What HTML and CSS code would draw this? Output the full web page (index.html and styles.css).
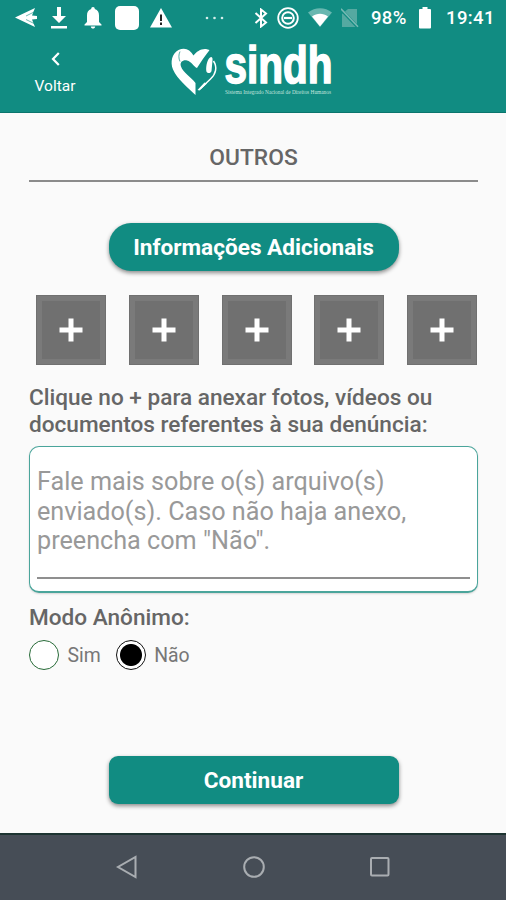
FILE: index.html
```html
<!DOCTYPE html>
<html lang="pt-BR">
<head>
    <meta charset="UTF-8">
    <meta name="viewport" content="width=device-width, initial-scale=1.0">
    <title>SINDH - Informações Adicionais</title>
    <link rel="stylesheet" href="styles.css">
</head>
<body>

    <!-- Barra de status -->
    <div class="status-bar">
        <div class="status-left">
            <svg width="22" height="20" viewBox="0 0 22 20"><path d="M0 9.500 20 0l-3 7.500 5 .5v3l-5 .5L20 19z" fill="#fff"/><path d="M11 8 20 3.500M11 11.500l8 4" stroke="#118c82" stroke-width=".6"/></svg>
            <svg width="16" height="22" viewBox="0 0 16 22"><path d="M6 0h4v9h5l-7 7-7-7h5zM0 19h16v2.500H0z" fill="#fff"/></svg>
            <svg width="18" height="22" viewBox="0 0 18 22"><path d="M9 0c1.200 0 1.800.8 1.800 2C14 3 15 5.500 15 8.500V15l2.500 2.500v1H.5v-1L3 15V8.500C3 5.500 4 3 7.200 2 7.200.8 7.800 0 9 0zM6.800 19.500h4.400C11 21 10.200 21.500 9 21.500s-2-.5-2.200-2z" fill="#fff"/></svg>
            <span class="app-square"></span>
            <svg width="22" height="20" viewBox="0 0 22 20"><path d="M11 0 22 19.500H0z" fill="#fff"/><path d="M11 6.500V13M11 14.500v2.500" stroke="#222" stroke-width="2"/></svg>
            <svg class="dots" width="19" height="4" viewBox="0 0 19 4"><g fill="#d5edea"><circle cx="2" cy="2" r="1.300"/><circle cx="9.500" cy="2" r="1.300"/><circle cx="17" cy="2" r="1.300"/></g></svg>
        </div>
        <div class="status-right">
            <svg width="14" height="20" viewBox="0 0 14 20"><path d="m1.500 5 10.500 9.500L7 18.500v-17L12 5.500 1.500 15" fill="none" stroke="#fff" stroke-width="2"/></svg>
            <svg width="22" height="22" viewBox="0 0 22 22"><g fill="none" stroke="#fff"><circle cx="11" cy="11" r="9.800" stroke-width="1.800"/><circle cx="11" cy="11" r="5.800" stroke-width="2"/><path d="M7 11h8" stroke-width="2.200"/></g></svg>
            <svg width="24" height="19" viewBox="0 0 24 19"><path d="M0 4.500C7-1.200 17-1.200 24 4.500L12 19z" fill="#68b7b0"/><path d="M4 8.500c5-3.800 11-3.800 16 0L12 18.500z" fill="#fff"/></svg>
            <svg width="18" height="20" viewBox="0 0 18 20"><path d="M7 1h9v18H1V6z" fill="#55a9a1"/><path d="m0 1.500 17 18" stroke="#118c82" stroke-width="3"/><path d="m0 .8 17 18" stroke="#78bab4" stroke-width="1.500"/></svg>
            <span class="battery-text">98%</span>
            <svg width="12" height="22" viewBox="0 0 12 22"><path d="M3.500 0h5v2H11q1 0 1 1v17.500q0 1-1 1H1q-1 0-1-1V3q0-1 1-1h2.500z" fill="#fff"/></svg>
            <span class="clock">19:41</span>
        </div>
    </div>

    <!-- Cabeçalho com botão de voltar e logo -->
    <header class="header">
        <a href="#" class="back-button">
            <svg width="9" height="14" viewBox="0 0 9 14"><path d="M7.800 1 2 7l5.800 6" fill="none" stroke="#fff" stroke-width="2.200"/></svg>
            <span>Voltar</span>
        </a>
        <svg class="logo" width="164" height="54" viewBox="0 0 164 54">
            <path d="M25.500 53C18 45.500 7 37 3 27.500 0 20 2 11.500 8.500 8c6-3 11.500-1 15 5.500C26.500 9.500 31 6.500 36 7l3.500 1C37 11.500 33 16.500 27 26c-3-1-5.500-6.500-10-7.500-4-.8-7.500 1.500-6 6C13 30.500 21 35 25.500 41z" fill="#fff"/>
            <path d="M10 19.500c-1.500-3-1.500-7 0-10" fill="none" stroke="#118c82" stroke-width=".7"/>
            <path d="M41 15c1.300 0 1.800 1.500 1.500 3.500L41.500 29c-.3 2.500-4.700 3-5.200 0-.5-5 1-12.500 4.700-14z" fill="#fff"/>
            <path d="M43.500 19c4 6 2.500 13-3 18L30 47" fill="none" stroke="#fff" stroke-width="1.500"/>
            <path d="m27.500 48 7-7.500 2.500 1-7.500 7z" fill="#fff"/>
            <text class="logo-name" x="54.500" y="41" textLength="108" lengthAdjust="spacingAndGlyphs">sindh</text>
            <text class="logo-tagline" x="55" y="51.500" textLength="106" lengthAdjust="spacingAndGlyphs">Sistema Integrado Nacional de Direitos Humanos</text>
        </svg>
    </header>

    <!-- Conteúdo do formulário -->
    <main class="content">
        <h1 class="title">OUTROS</h1>

        <div class="section-badge">Informações Adicionais</div>

        <div class="attachments">
            <button class="attach"><svg width="24" height="24" viewBox="0 0 24 24"><path d="M12 .5v23M.5 12h23" stroke="#fff" stroke-width="5"/></svg></button>
            <button class="attach"><svg width="24" height="24" viewBox="0 0 24 24"><path d="M12 .5v23M.5 12h23" stroke="#fff" stroke-width="5"/></svg></button>
            <button class="attach"><svg width="24" height="24" viewBox="0 0 24 24"><path d="M12 .5v23M.5 12h23" stroke="#fff" stroke-width="5"/></svg></button>
            <button class="attach"><svg width="24" height="24" viewBox="0 0 24 24"><path d="M12 .5v23M.5 12h23" stroke="#fff" stroke-width="5"/></svg></button>
            <button class="attach"><svg width="24" height="24" viewBox="0 0 24 24"><path d="M12 .5v23M.5 12h23" stroke="#fff" stroke-width="5"/></svg></button>
        </div>

        <p class="label">Clique no + para anexar fotos, vídeos ou<br>documentos referentes à sua denúncia:</p>

        <div class="description-box">
            <textarea class="description" placeholder='Fale mais sobre o(s) arquivo(s) enviado(s). Caso não haja anexo, preencha com "Não".'></textarea>
        </div>

        <p class="label anonymous-label">Modo Anônimo:</p>
        <div class="radio-group">
            <label class="radio"><input type="radio" name="anonimo" value="sim"><span>Sim</span></label>
            <label class="radio"><input type="radio" name="anonimo" value="nao" checked><span>Não</span></label>
        </div>

        <button class="submit-button">Continuar</button>
    </main>

    <!-- Barra de navegação do sistema -->
    <nav class="nav-bar">
        <svg width="22" height="24" viewBox="0 0 22 24"><path d="M19.500 2v20L2 12z"/></svg>
        <svg width="24" height="24" viewBox="0 0 24 24"><circle cx="12" cy="12" r="9.800"/></svg>
        <svg width="22" height="22" viewBox="0 0 22 22"><rect x="2" y="2" width="17.500" height="17.500" rx="1"/></svg>
    </nav>

</body>
</html>
```

FILE: styles.css
```css
* {
    box-sizing: border-box;
}

body {
    margin: 0;
    height: 900px;
    display: flex;
    flex-direction: column;
    background-color: #fafafa;
    font-family: Roboto, sans-serif;
    color: #666;
    overflow: hidden;
}

svg {
    display: block;
    flex-shrink: 0;
}

/* Barra de status */
.status-bar {
    height: 36px;
    flex-shrink: 0;
    display: flex;
    justify-content: space-between;
    align-items: center;
    padding: 0 10px 1px 15px;
    background-color: #118c82;
    color: #fff;
    font-size: 18.5px;
    font-weight: 500;
}

.status-left,
.status-right {
    display: flex;
    align-items: center;
}

.status-left {
    gap: 14px;
}

.status-left svg:nth-child(3) {
    margin-left: 3px;
}

.status-left .dots {
    margin-left: 19px;
}

.app-square {
    width: 24px;
    height: 24px;
    margin-left: -1px;
    border-radius: 5px;
    background-color: #fff;
}

.app-square + svg {
    margin-left: -3px;
}

.status-right {
    gap: 9px;
}

.status-right svg:nth-child(-n+4) {
    transform: translateX(1px);
}

.battery-text {
    width: 37px;
    margin: 0 2px 0 4px;
    letter-spacing: 0.3px;
    white-space: nowrap;
}

.clock {
    width: 50px;
    margin-left: 6px;
    letter-spacing: 0.4px;
}

/* Cabeçalho */
.header {
    height: 77px;
    flex-shrink: 0;
    display: flex;
    align-items: flex-start;
    padding: 6px 0 0 34px;
    background-color: #118c82;
    border-bottom: 1px solid #0a756d;
}

.back-button {
    width: 42px;
    display: flex;
    flex-direction: column;
    align-items: center;
    gap: 11px;
    padding-top: 10px;
    color: #fff;
    font-size: 15.5px;
    line-height: 18px;
    text-decoration: none;
}

.logo {
    margin-left: 94px;
    overflow: visible;
}

.logo-name {
    font: bold 51px "Liberation Sans", Arial, sans-serif;
    fill: #fff;
    stroke: #fff;
    stroke-width: 1.6px;
}

.logo-tagline {
    font: 5.5px "Liberation Serif", serif;
    fill: #c5e4df;
}

/* Conteúdo */
.content {
    flex: 1;
    display: flex;
    flex-direction: column;
    padding: 30px 28px 0 29px;
}

.title {
    height: 39px;
    margin: 0;
    border-bottom: 2px solid #8b8b8b;
    font-size: 22.8px;
    font-weight: 500;
    line-height: 29px;
    text-align: center;
}

.section-badge {
    align-self: center;
    width: 290px;
    height: 48px;
    margin-top: 41px;
    border-radius: 22px;
    background-color: #118c82;
    box-shadow: 0 2px 4px rgba(0, 0, 0, 0.45);
    color: #fff;
    font-size: 22.6px;
    font-weight: 700;
    line-height: 49px;
    text-align: center;
}

/* Botões de anexo */
.attachments {
    display: flex;
    justify-content: space-between;
    margin: 24px 1px 0 7px;
}

.attach {
    width: 70px;
    height: 70px;
    display: flex;
    justify-content: center;
    align-items: center;
    padding: 0 0 1px;
    border: 1px solid #707070;
    background-color: #707070;
    box-shadow: inset 0 0 0 5px #7a7a7a;
}

.label {
    margin: 19px 0 0;
    font-size: 22.6px;
    font-weight: 500;
    line-height: 27px;
    white-space: nowrap;
}

/* Caixa de descrição */
.description-box {
    height: 147px;
    flex-shrink: 0;
    margin-top: 8px;
    padding: 20px 7px 0;
    border: 2px solid #4aa59b;
    border-top-width: 1px;
    border-right-width: 1px;
    border-left-width: 1px;
    border-radius: 10px;
    background-color: #fff;
    box-shadow: 0 1px 2px rgba(0, 0, 0, 0.15);
}

.description {
    display: block;
    width: 100%;
    height: 112px;
    padding: 0;
    border: none;
    border-bottom: 2px solid #8f8f8f;
    background: none;
    font-family: inherit;
    font-size: 25.2px;
    line-height: 29.5px;
    resize: none;
    outline: none;
    overflow: hidden;
}

.description::placeholder {
    color: #999;
}

.anonymous-label {
    margin-top: 11px;
}

/* Opções de modo anônimo */
.radio-group {
    display: flex;
    gap: 15px;
    margin-top: 9px;
}

.radio {
    display: flex;
    align-items: center;
    gap: 8.5px;
    color: #777;
    font-size: 19.4px;
    line-height: 30px;
}

.radio span {
    padding-top: 2px;
    line-height: 28px;
}

.radio input {
    appearance: none;
    width: 30px;
    height: 30px;
    margin: 0;
    border: 1.5px solid #286b38;
    border-radius: 50%;
    background-color: #fff;
}

.radio input:checked {
    border-color: #111;
    background: radial-gradient(circle, #000 10.5px, #fff 11.5px);
}

.submit-button {
    align-self: center;
    width: 290px;
    height: 48px;
    margin-top: 86px;
    padding: 0;
    border: none;
    border-radius: 9px;
    background-color: #118c82;
    box-shadow: 0 2px 4px rgba(0, 0, 0, 0.45);
    color: #fff;
    font-family: inherit;
    font-size: 22.6px;
    font-weight: 700;
}

/* Barra de navegação */
.nav-bar {
    height: 67px;
    flex-shrink: 0;
    display: flex;
    justify-content: space-between;
    align-items: center;
    padding: 0 115px 2px 116px;
    border-top: 2px solid #1d3431;
    background-color: #464d56;
}

.nav-bar svg {
    fill: none;
    stroke: #a9adb1;
    stroke-width: 2;
}
```
